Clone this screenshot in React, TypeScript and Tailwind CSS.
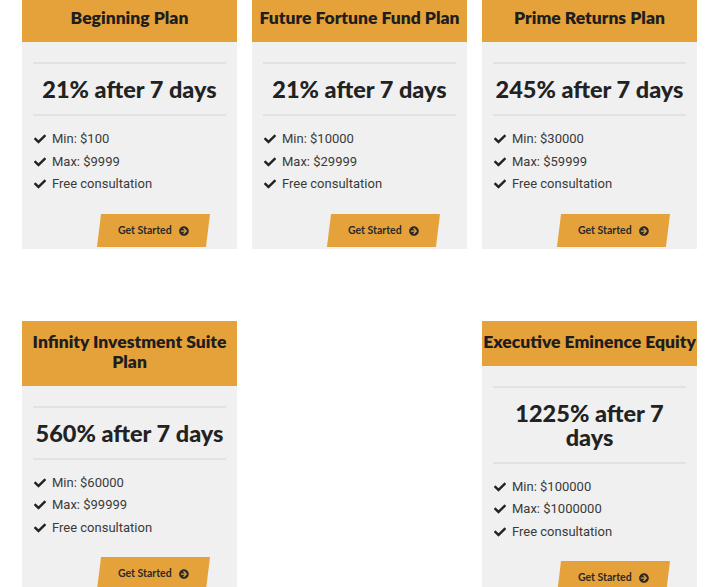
import React from "react";
import { FaCheck, FaArrowCircleRight } from "react-icons/fa";

type Plan = { title: string; rate: string; min: string; max: string };

const plans: (Plan | null)[] = [
  { title: "Beginning Plan", rate: "21% after 7 days", min: "$100", max: "$9999" },
  { title: "Future Fortune Fund Plan", rate: "21% after 7 days", min: "$10000", max: "$29999" },
  { title: "Prime Returns Plan", rate: "245% after 7 days", min: "$30000", max: "$59999" },
  { title: "Infinity Investment Suite Plan", rate: "560% after 7 days", min: "$60000", max: "$99999" },
  null,
  { title: "Executive Eminence Equity", rate: "1225% after 7 days", min: "$100000", max: "$1000000" },
];

function Card({ p }: { p: Plan }) {
  return (
    <div className="bg-[#f0f0f0] flex flex-col">
      <div className="bg-[#e6a23a] pt-[11px] pb-[14px] px-[1px] text-center text-[17.5px] leading-[20px] font-extrabold text-[#1e1e1e]" style={{ fontFamily: "Lato, sans-serif" }}>
        {p.title}
      </div>
      <div className="pt-[20px] px-[11px] pb-[2px]">
        <div className="border-t-2 border-[#e2e2e2]" />
        <div className="py-[13px] text-center text-[23.5px] leading-[24px] font-black text-[#222]" style={{ fontFamily: "Lato, sans-serif" }}>
          {p.rate}
        </div>
        <div className="border-t-2 border-[#e2e2e2]" />
        <ul className="mt-[12px] text-[13px] leading-[22.5px] text-[#3a3a3a]" style={{ fontFamily: "Roboto, sans-serif" }}>
          {["Min: " + p.min, "Max: " + p.max, "Free consultation"].map((t) => (
            <li key={t} className="flex items-center">
              <FaCheck className="w-[12px] h-[12px] ml-[1px] mr-[6px] text-[#222]" />
              <span>{t}</span>
            </li>
          ))}
        </ul>
        <div className="mt-[18px] ml-[66px] w-[109px] h-[33px] bg-[#e6a23a] -skew-x-[7deg] flex items-center justify-center">
          <div className="skew-x-[7deg] flex items-center gap-[7px] text-[10.5px] font-bold text-[#2a2a2a]" style={{ fontFamily: "Lato, sans-serif" }}>
            <span>Get Started</span>
            <FaArrowCircleRight className="w-[10px] h-[10px]" />
          </div>
        </div>
      </div>
    </div>
  );
}

export default function App() {
  return (
    <div className="w-[720px] h-[587px] overflow-hidden bg-white">
      <div className="-mt-[3px] pl-[22px] pr-[23px] grid grid-cols-3 gap-x-[15px] gap-y-[72px] items-start">
        {plans.map((p, i) => (p ? <Card key={i} p={p} /> : <div key={i} />))}
      </div>
    </div>
  );
}
